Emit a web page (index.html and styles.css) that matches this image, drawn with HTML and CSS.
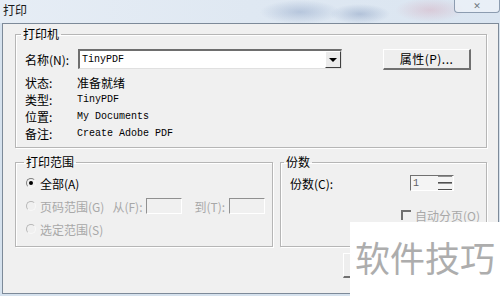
FILE: index.html
```html
<!DOCTYPE html>
<html lang="zh-CN">
<head>
  <meta charset="UTF-8" />
  <title>打印</title>
  <link rel="stylesheet" href="styles.css">
</head>
<body>
  <div class="titlebar">
    <span class="title">打印</span>
    <div class="close">✕</div>
  </div>

  <div class="dialog">
    <fieldset class="group printer">
      <legend>打印机</legend>
      <div class="name-row">
        <label class="name-label">名称(N):</label>
        <div class="combo">
          <span class="mono">TinyPDF</span>
          <span class="drop"><i class="arrow"></i></span>
        </div>
        <button class="btn props">属性(P)...</button>
      </div>
      <div class="info">
        <div class="info-row"><span class="key">状态:</span><span class="val">准备就绪</span></div>
        <div class="info-row"><span class="key">类型:</span><span class="val mono">TinyPDF</span></div>
        <div class="info-row"><span class="key">位置:</span><span class="val mono">My Documents</span></div>
        <div class="info-row"><span class="key">备注:</span><span class="val mono">Create Adobe PDF</span></div>
      </div>
    </fieldset>

    <div class="lower">
      <fieldset class="group range">
        <legend>打印范围</legend>
        <div class="radio-row">
          <span class="radio checked"></span><span>全部(A)</span>
        </div>
        <div class="radio-row disabled">
          <span class="radio"></span><span>页码范围(G)</span>
          <span class="from">从(F):</span><span class="field"></span>
          <span class="to">到(T):</span><span class="field"></span>
        </div>
        <div class="radio-row disabled">
          <span class="radio"></span><span>选定范围(S)</span>
        </div>
      </fieldset>

      <fieldset class="group copies">
        <legend>份数</legend>
        <div class="copies-row">
          <span>份数(C):</span>
          <div class="spin">
            <span class="spin-val mono">1</span>
            <span class="spin-btns"><i></i><i></i></span>
          </div>
        </div>
        <div class="check-row disabled">
          <span class="check"></span><span>自动分页(O)</span>
        </div>
      </fieldset>
    </div>

    <div class="actions">
      <button class="btn"></button>
    </div>
  </div>

  <div class="watermark">软件技巧</div>
</body>
</html>
```

FILE: styles.css
```css
body {
  margin: 0;
  width: 500px;
  height: 296px;
  overflow: hidden;
  position: relative;
  font-family: "Noto Sans CJK SC", "DejaVu Sans", sans-serif;
  font-size: 12px;
  color: #000;
  background: #d6e2ee;
}

.mono {
  font-family: "Liberation Mono", "DejaVu Sans Mono", monospace;
  font-size: 10px;
}

/* title bar */
.titlebar {
  height: 23px;
  position: relative;
  background:
    radial-gradient(ellipse 40px 12px at 300px 12px, rgba(90, 120, 170, 0.3), transparent),
    radial-gradient(ellipse 30px 10px at 360px 14px, rgba(80, 110, 160, 0.3), transparent),
    radial-gradient(ellipse 35px 12px at 430px 10px, rgba(210, 140, 160, 0.3), transparent),
    linear-gradient(90deg, #e6edf5 0%, #dfe8f2 50%, #dae5f1 100%);
}

.title {
  display: block;
  padding-left: 3px;
  line-height: 20px;
  color: #1a1a1a;
}

.close {
  position: absolute;
  top: 0;
  right: 0;
  width: 46px;
  height: 13px;
  box-sizing: border-box;
  border: 1px solid #8c9cb0;
  border-top: none;
  border-radius: 0 0 4px 4px;
  background: rgba(240, 244, 250, 0.7);
  color: #707880;
  font-size: 9px;
  line-height: 11px;
  text-align: center;
}

/* dialog body */
.dialog {
  margin-left: 2px;
  width: 497px;
  height: 271px;
  box-sizing: border-box;
  border: 1px solid #7d8a99;
  background: #f0f0f0;
  padding: 3px 11px 0 12px;
}

.group {
  margin: 0;
  padding: 0;
  border: 1px solid #b6b6b6;
  box-shadow: 1px 1px 0 #fff, inset 1px 1px 0 #fff;
  min-width: 0;
}

.group legend {
  padding: 0 2px;
  line-height: 14px;
}

.printer {
  padding: 0 0 5px 9px;
}

.printer legend {
  margin-left: -4px;
}

.name-row {
  display: flex;
  align-items: center;
  height: 20px;
  margin-top: 8px;
}

.name-label {
  width: 53px;
}

.combo {
  width: 264px;
  height: 20px;
  box-sizing: border-box;
  display: flex;
  align-items: center;
  justify-content: space-between;
  background: #fff;
  border-top: 2px solid #6e6e6e;
  border-left: 2px solid #6e6e6e;
  border-right: 1px solid #e0e0e0;
  border-bottom: 1px solid #e0e0e0;
  padding-left: 2px;
}

.drop {
  width: 16px;
  height: 17px;
  box-sizing: border-box;
  background: #ececec;
  border-right: 1px solid #404040;
  border-bottom: 1px solid #404040;
  border-top: 1px solid #fff;
  border-left: 1px solid #fff;
  display: flex;
  align-items: center;
  justify-content: center;
}

.arrow {
  width: 0;
  height: 0;
  border-left: 4px solid transparent;
  border-right: 4px solid transparent;
  border-top: 4px solid #000;
}

.btn {
  font-family: inherit;
  font-size: 12px;
  color: #000;
  background: #eeeeee;
  border-top: 1px solid #fff;
  border-left: 1px solid #fff;
  border-right: 2px solid #707070;
  border-bottom: 2px solid #707070;
  padding: 0;
  height: 21px;
}

.props {
  width: 88px;
  margin-left: 41px;
  letter-spacing: 0.5px;
}

.info {
  margin-top: 5px;
}

.info-row {
  display: flex;
  align-items: center;
  height: 17px;
}

.key {
  width: 52px;
}

/* lower groups */
.lower {
  display: flex;
  gap: 7px;
  margin-top: 7px;
}

.range {
  width: 258px;
  box-sizing: border-box;
  height: 92px;
  padding: 3px 0 0 10px;
}

.range legend {
  margin-left: -2px;
}

.radio-row {
  display: flex;
  align-items: center;
  height: 22px;
  margin-bottom: 1px;
}

.radio-row.disabled,
.check-row.disabled {
  color: #a8a8a8;
}

.radio {
  width: 10px;
  height: 10px;
  box-sizing: border-box;
  border-radius: 50%;
  border: 1px solid;
  border-color: #808080 #f8f8f8 #f8f8f8 #808080;
  margin-right: 4px;
  position: relative;
}

.radio-row.disabled .radio {
  border-color: #b8b8b8 #f8f8f8 #f8f8f8 #b8b8b8;
}

.radio.checked::after {
  content: "";
  position: absolute;
  left: 2px;
  top: 2px;
  width: 4px;
  height: 4px;
  border-radius: 50%;
  background: #000;
}

.from {
  margin-left: 8px;
  margin-right: 4px;
}

.to {
  margin-left: 12px;
  margin-right: 4px;
}

.field {
  width: 36px;
  height: 16px;
  box-sizing: border-box;
  border-top: 1px solid #909090;
  border-left: 1px solid #909090;
  border-right: 1px solid #fff;
  border-bottom: 1px solid #fff;
  background: #f0f0f0;
}

.copies {
  flex: 1;
  height: 92px;
  box-sizing: border-box;
  padding: 2px 0 0 9px;
}

.copies legend {
  margin-left: -6px;
}

.copies-row {
  display: flex;
  align-items: center;
  height: 24px;
}

.spin {
  margin-left: 77px;
  width: 44px;
  height: 16px;
  box-sizing: border-box;
  display: flex;
  align-items: center;
  justify-content: space-between;
  border-top: 1px solid #707070;
  border-left: 1px solid #707070;
  border-right: 1px solid #fff;
  border-bottom: 1px solid #fff;
  background: #f4f4f4;
  padding-left: 2px;
}

.spin-val {
  color: #606060;
}

.spin-btns {
  width: 14px;
  height: 14px;
  display: flex;
  flex-direction: column;
  justify-content: space-between;
  margin-right: 1px;
}

.spin-btns i {
  display: block;
  height: 6px;
  border-bottom: 1px solid #505050;
  border-top: 1px solid #909090;
}

.check-row {
  display: flex;
  align-items: center;
  justify-content: flex-end;
  height: 20px;
  margin-top: 10px;
  padding-right: 6px;
}

.check {
  width: 10px;
  height: 10px;
  box-sizing: border-box;
  border-top: 2px solid #707070;
  border-left: 2px solid #707070;
  margin-right: 4px;
}

.actions {
  display: flex;
  margin-top: 6px;
  padding-left: 328px;
}

.actions .btn {
  width: 72px;
  height: 25px;
}

/* site watermark pasted over the corner */
.watermark {
  position: absolute;
  left: 350px;
  top: 222px;
  width: 150px;
  height: 74px;
  background: #fff;
  color: #adadad;
  font-size: 35px;
  line-height: 70px;
  text-align: center;
}
```
